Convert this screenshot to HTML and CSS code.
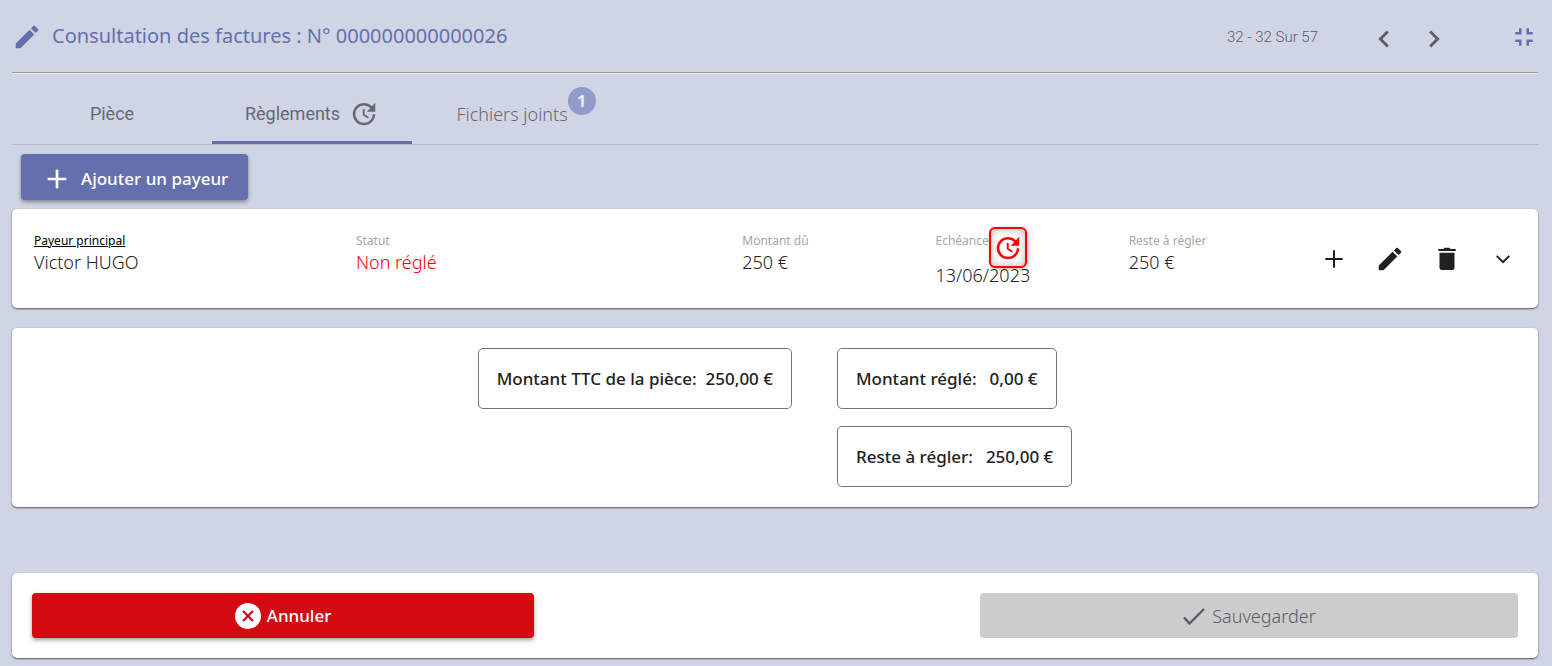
FILE: index.html
```
<!DOCTYPE html>
<html lang="fr">
<head>
    <meta charset="UTF-8">
    <meta name="viewport" content="width=device-width, initial-scale=1.0">
    <title>Consultation des factures</title>
    <link rel="stylesheet" href="styles.css">
</head>
<body>
    <!-- En-tête -->
    <header class="header">
        <svg class="icon title-icon" viewBox="0 0 24 24"><path d="M3 17.25V21h3.75L17.81 9.94l-3.75-3.75L3 17.25zM20.71 7.04a1 1 0 0 0 0-1.41l-2.34-2.34a1 1 0 0 0-1.41 0l-1.83 1.83 3.75 3.75 1.83-1.83z"/></svg>
        <h1>Consultation des factures : N° 000000000000026</h1>
        <div class="pager">
            <span>32 - 32 Sur 57</span>
            <button class="icon-btn" aria-label="Précédent"><svg class="icon chevron" viewBox="0 0 24 24"><path d="M15.41 7.41L14 6l-6 6 6 6 1.41-1.41L10.83 12z"/></svg></button>
            <button class="icon-btn" aria-label="Suivant"><svg class="icon chevron" viewBox="0 0 24 24"><path d="M10 6L8.59 7.41 13.17 12l-4.58 4.59L10 18l6-6z"/></svg></button>
        </div>
        <button class="icon-btn reduce" aria-label="Réduire"><svg class="icon large" viewBox="0 0 24 24"><path d="M5 16h3v3h2v-5H5v2zm3-8H5v2h5V5H8v3zm6 11h2v-3h3v-2h-5v5zm2-11V5h-2v5h5V8h-3z"/></svg></button>
    </header>

    <!-- Onglets -->
    <nav class="tabs">
        <a href="#piece" class="tab">Pièce</a>
        <a href="#reglements" class="tab active">Règlements
            <svg class="icon" viewBox="0 0 24 24"><path d="M21 10.12h-6.78l2.74-2.82c-2.73-2.7-7.15-2.8-9.88-.1a6.875 6.875 0 0 0 0 9.79 7.02 7.02 0 0 0 9.88 0C18.32 15.65 19 14.08 19 12.1h2c0 1.98-.88 4.55-2.64 6.29-3.51 3.48-9.21 3.48-12.72 0-3.5-3.47-3.53-9.11-.02-12.58a8.987 8.987 0 0 1 12.65 0L21 3v7.12zM12.5 8v4.25l3.5 2.08-.72 1.21L11 13V8h1.5z"/></svg>
        </a>
        <a href="#fichiers" class="tab light"><span class="tab-label">Fichiers joints<span class="badge">1</span></span></a>
    </nav>

    <button class="btn btn-add">
        <svg class="icon" viewBox="0 0 24 24"><path d="M19 13h-6v6h-2v-6H5v-2h6V5h2v6h6v2z"/></svg>
        Ajouter un payeur
    </button>

    <!-- Payeur -->
    <section class="card payer">
        <div class="field">
            <span class="label main">Payeur principal</span>
            <span class="value">Victor HUGO</span>
        </div>
        <div class="field">
            <span class="label">Statut</span>
            <span class="value unpaid">Non réglé</span>
        </div>
        <div class="field">
            <span class="label">Montant dû</span>
            <span class="value">250 €</span>
        </div>
        <div class="field due">
            <span class="label">Echéance
                <span class="late"><svg class="icon large" viewBox="0 0 24 24"><path d="M21 10.12h-6.78l2.74-2.82c-2.73-2.7-7.15-2.8-9.88-.1a6.875 6.875 0 0 0 0 9.79 7.02 7.02 0 0 0 9.88 0C18.32 15.65 19 14.08 19 12.1h2c0 1.98-.88 4.55-2.64 6.29-3.51 3.48-9.21 3.48-12.72 0-3.5-3.47-3.53-9.11-.02-12.58a8.987 8.987 0 0 1 12.65 0L21 3v7.12zM12.5 8v4.25l3.5 2.08-.72 1.21L11 13V8h1.5z"/></svg></span>
            </span>
            <span class="value">13/06/2023</span>
        </div>
        <div class="field">
            <span class="label">Reste à régler</span>
            <span class="value">250 €</span>
        </div>
        <div class="actions">
            <button class="icon-btn" aria-label="Ajouter"><svg class="icon" viewBox="0 0 24 24"><path d="M20.7 13H13v7.700h-2V13H3.300v-2H11V3.300h2V11h7.700z"/></svg></button>
            <button class="icon-btn" aria-label="Modifier"><svg class="icon large" viewBox="0 0 24 24"><path d="M3 17.25V21h3.75L17.81 9.94l-3.75-3.75L3 17.25zM20.71 7.04a1 1 0 0 0 0-1.41l-2.34-2.34a1 1 0 0 0-1.41 0l-1.83 1.83 3.75 3.75 1.83-1.83z"/></svg></button>
            <button class="icon-btn" aria-label="Supprimer"><svg class="icon" viewBox="0 0 24 24"><path d="M4.500 5.700V20.500a2.500 2.500 0 0 0 2.500 2.500h10a2.500 2.500 0 0 0 2.500-2.500V5.700zM3.300 2h5.200l1-1.200h5l1 1.200h5.200v1.900H3.300z"/></svg></button>
            <button class="icon-btn" aria-label="Détails"><svg class="icon" viewBox="0 0 24 24"><path d="M6.400 8.200L12 13.800l5.600-5.600L19 9.600l-7 7-7-7z"/></svg></button>
        </div>
    </section>

    <!-- Totaux -->
    <section class="card totals">
        <div class="total">Montant TTC de la pièce: <span>250,00 €</span></div>
        <div class="totals-col">
            <div class="total wide">Montant réglé: <span>0,00 €</span></div>
            <div class="total wide">Reste à régler: <span>250,00 €</span></div>
        </div>
    </section>

    <footer class="card footer">
        <button class="btn btn-cancel">
            <svg class="icon" viewBox="0 0 24 24"><path d="M12 0a12 12 0 1 0 0 24 12 12 0 0 0 0-24zm5.300 15.900l-1.400 1.400-3.900-3.900-3.900 3.900-1.400-1.400 3.900-3.900-3.900-3.900 1.400-1.400 3.900 3.900 3.900-3.900 1.400 1.400-3.900 3.900z"/></svg>
            Annuler
        </button>
        <button class="btn btn-save" disabled>
            <svg class="icon" viewBox="0 0 24 24"><path d="M2 13.500l5.500 6L22 5" fill="none" stroke="currentColor" stroke-width="2.400"/></svg>
            Sauvegarder
        </button>
    </footer>
</body>
</html>
```
FILE: styles.css
```
* {
    box-sizing: border-box;
}
body {
    font-family: "Noto Sans", sans-serif;
    font-size: 17px;
    line-height: 24px;
    margin: 0;
    padding: 0 14px 8px 12px;
    background-color: #d0d5e5;
    color: #212121;
}
button {
    font-family: inherit;
    font-size: inherit;
    line-height: inherit;
    border: none;
    cursor: pointer;
}
.icon {
    width: 24px;
    height: 24px;
    fill: currentColor;
    flex: none;
    display: block;
}
.icon-btn {
    padding: 0;
    background: none;
    color: inherit;
    width: 24px;
    height: 24px;
    display: flex;
    align-items: center;
    justify-content: center;
}
.large {
    width: 30px;
    height: 30px;
}

/* En-tête */
.header {
    display: flex;
    align-items: center;
    height: 74px;
    border-bottom: 1px solid #eeeeee;
    box-shadow: inset 0 -1px #999999;
    color: #6470ae;
}
.title-icon {
    width: 30px;
    height: 30px;
}
h1 {
    font-size: 20px;
    font-weight: 400;
    margin: 0 auto 0 10px;
    padding-bottom: 2px;
}
.pager {
    display: flex;
    align-items: center;
    gap: 22px;
    margin-right: 64px;
    font-family: Roboto, sans-serif;
    font-size: 15px;
    font-weight: 300;
    color: #5b5d66;
}
.pager span {
    margin-right: 30px;
}
.pager .icon-btn {
    width: 28px;
    padding-top: 4px;
}
.chevron {
    width: 34px;
    height: 34px;
}
.reduce {
    margin-right: 2px;
}

/* Onglets */
.tabs {
    display: flex;
    height: 71px;
    border-bottom: 1px solid #b4b9cf;
}
.tab {
    width: 200px;
    display: flex;
    align-items: center;
    justify-content: center;
    gap: 9px;
    padding-top: 13px;
    border-bottom: 3px solid transparent;
    font-family: Roboto, sans-serif;
    font-size: 18px;
    color: #666973;
    text-decoration: none;
}
.tab .icon {
    width: 30px;
    height: 30px;
}
.tab.active {
    border-bottom-color: #6470ae;
}
.tab.light {
    font-family: "Noto Sans", sans-serif;
    font-weight: 300;
}
.tab-label {
    position: relative;
}
.badge {
    position: absolute;
    left: 100%;
    top: -15px;
    width: 28px;
    height: 28px;
    border-radius: 50%;
    background-color: #919bc9;
    color: #e8ebf4;
    font-size: 16px;
    font-weight: 700;
    line-height: 28px;
    text-align: center;
}

/* Boutons */
.btn {
    display: flex;
    align-items: center;
    justify-content: center;
    height: 45px;
    border-radius: 4px;
    color: white;
    font-size: 17px;
    font-weight: 500;
    box-shadow: 0 2px 4px rgba(0, 0, 0, 0.4);
}
.btn-add {
    gap: 8px;
    height: 46px;
    margin: 9px;
    padding: 3px 20px 0;
    background-color: #6470ae;
}
.btn-add .icon {
    width: 32px;
    height: 32px;
}

.card {
    background-color: white;
    border-radius: 5px;
    box-shadow: 0 1px 2px rgba(0, 0, 0, 0.6);
}

/* Payeur */
.payer {
    display: grid;
    grid-template-columns: 5fr 6fr 3fr 3fr 3fr 3fr;
    padding: 22px 23px 22px 22px;
    height: 99px;
}
.field {
    display: flex;
    flex-direction: column;
}
.label {
    font-size: 12px;
    line-height: 20px;
    color: #a6a6a6;
}
.label.main {
    color: black;
    text-decoration: underline;
}
.value {
    font-size: 18px;
    font-weight: 300;
    line-height: 22px;
}
.unpaid {
    color: red;
}
.due .label {
    display: flex;
    height: 33px;
}
.late {
    width: 38px;
    height: 41px;
    margin-top: -4px;
    flex: none;
    display: flex;
    align-items: center;
    justify-content: center;
    border: 2px solid red;
    border-radius: 6px;
    background-color: white;
    color: red;
    box-shadow: 1px 1px 4px rgba(0, 0, 0, 0.3), inset 0 0 8px rgba(0, 0, 0, 0.3);
}
.actions {
    display: flex;
    align-items: center;
    justify-content: space-between;
}

/* Totaux */
.totals {
    display: flex;
    justify-content: center;
    align-items: flex-start;
    gap: 45px;
    margin-top: 20px;
    padding: 20px;
}
.totals-col {
    display: flex;
    flex-direction: column;
    align-items: flex-start;
    gap: 17px;
}
.total {
    display: flex;
    gap: 9px;
    padding: 18px;
    border: 1px solid #757575;
    border-radius: 5px;
    line-height: 23px;
    font-weight: 500;
}
.total.wide {
    gap: 13px;
}

/* Pied de page */
.footer {
    display: grid;
    grid-template-columns: 28fr 30fr;
    column-gap: 30%;
    margin-top: 66px;
    padding: 20px;
}
.footer .btn {
    gap: 6px;
}
.btn-cancel {
    background-color: #d40a10;
}
.btn-cancel .icon {
    width: 26px;
    height: 26px;
}
.footer .btn-save {
    background-color: #cccccc;
    color: #5a5c68;
    font-size: 18px;
    font-weight: 300;
    box-shadow: none;
    cursor: default;
}
```
